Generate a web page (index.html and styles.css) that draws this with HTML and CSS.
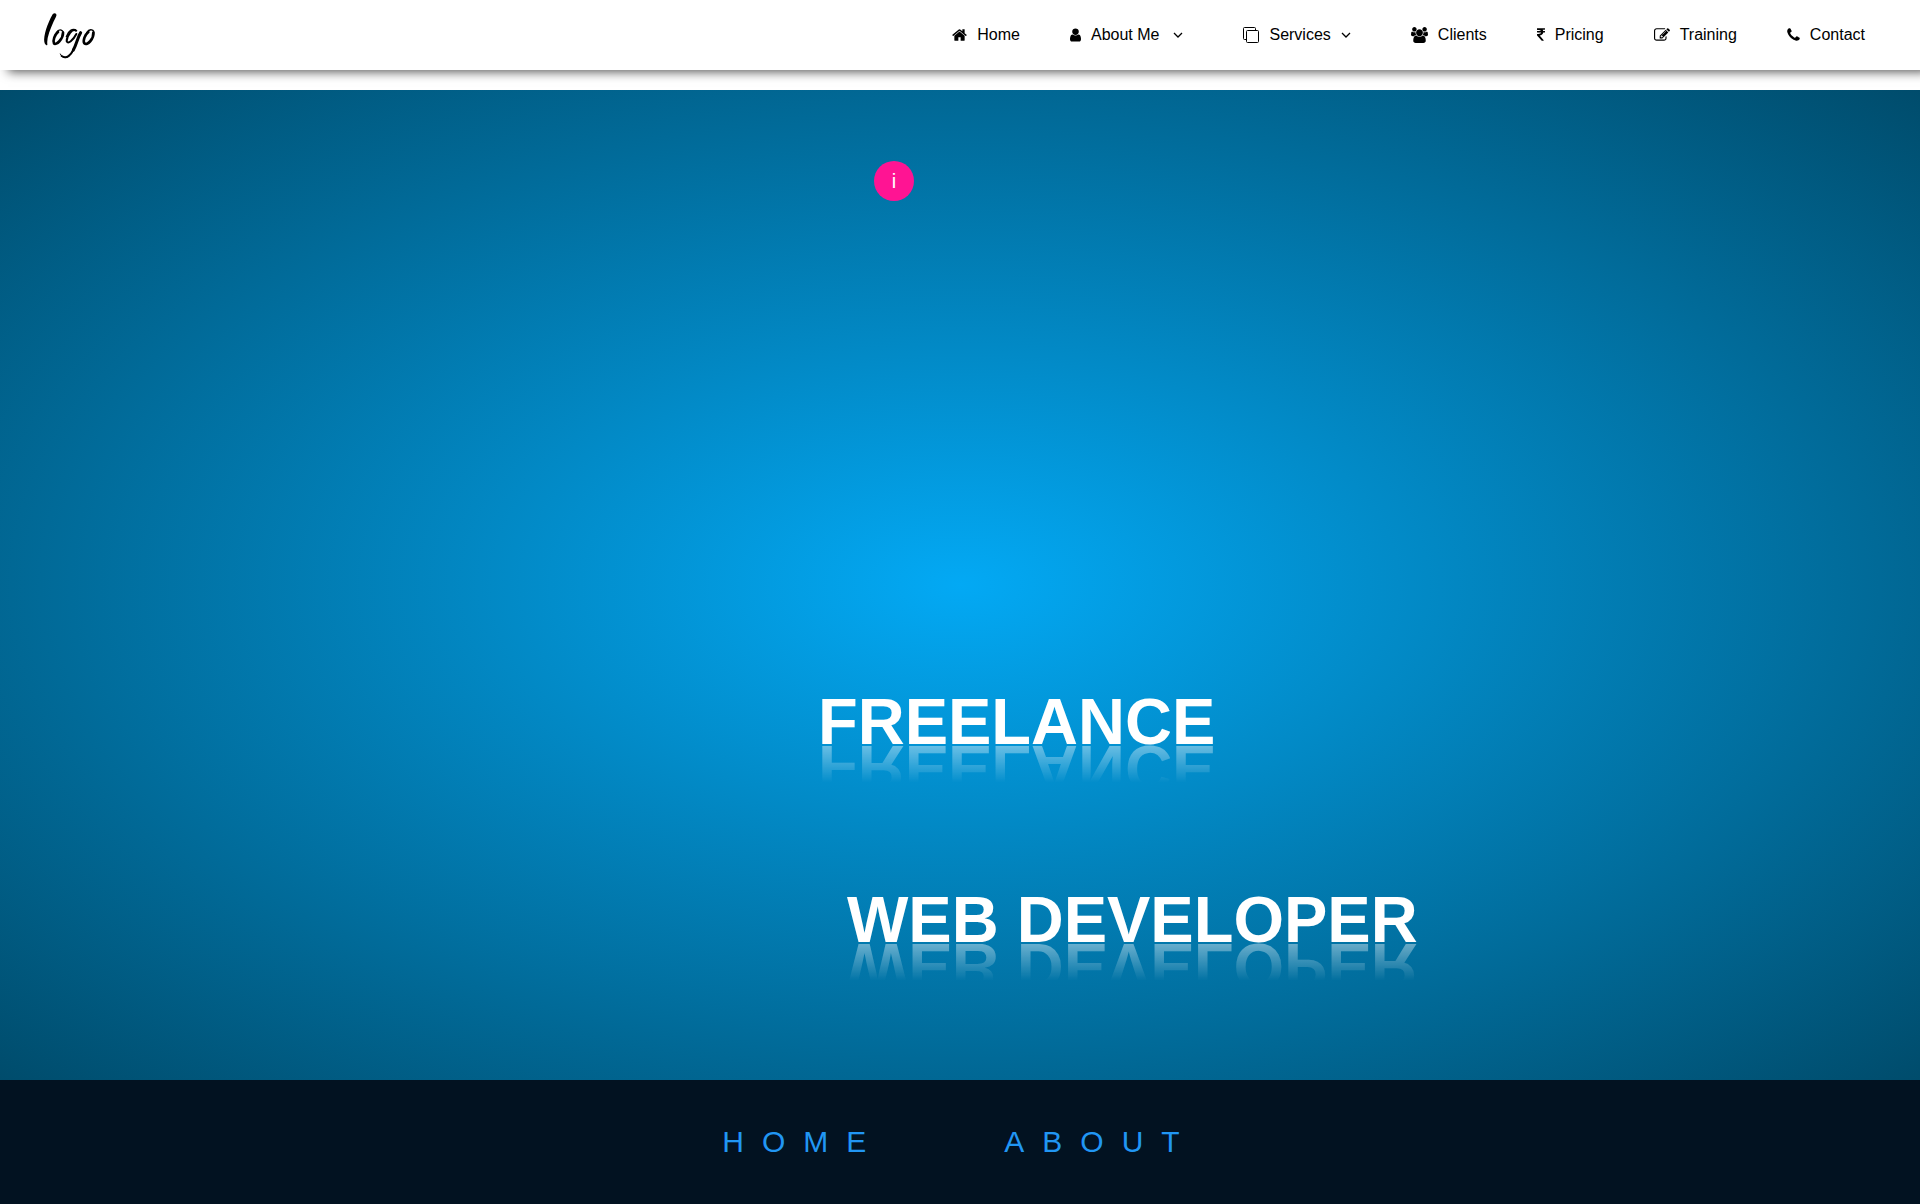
FILE: index.html
```html
<!DOCTYPE html>
<html lang="en">
<head>
<meta charset="utf-8">
<title>Freelance Web Developer</title>
<link rel="stylesheet" href="styles.css">
</head>
<body>
<header class="header">
  <a class="logo" href="#" aria-label="logo">
    <svg width="66" height="60" viewBox="0 -3 198 180" fill="none" stroke="#000" stroke-linecap="round" stroke-linejoin="round">
      <path fill="#000" stroke="none" d="M50 25Q55 19 60 23Q63 26 60 32C50 52 40 74 35 96Q33 108 34 117Q27 120 25 108C22 90 34 53 50 25z"/>
      <path stroke-width="8" d="M66 78C56 86 50 104 54 112C60 120 82 98 81 80"/>
      <path stroke-width="4" d="M61 80C70 66 84 72 81 84"/>
      <path stroke-width="6" d="M120 74C110 66 92 88 92 106C95 116 112 102 121 84"/>
      <path stroke-width="4" d="M122 74C110 64 96 76 91 92"/>
      <path stroke-width="9" d="M134 80C124 96 122 114 112 132"/>
      <path stroke-width="6" d="M114 128C104 148 92 160 77 150"/>
      <path stroke-width="3" d="M111 136C100 158 80 162 73 144"/>
      <path stroke-width="8" d="M157 78C147 86 140 104 145 112C154 120 174 98 172 80"/>
      <path stroke-width="4" d="M152 80C161 66 176 70 173 84"/>
    </svg>
  </a>
  <nav class="nav">
    <a class="nav-link" href="#"><svg class="icon" width="15" height="16" viewBox="0 0 1664 1792"><path d="M1408 992v480q0 26-19 45t-45 19H960v-384H704v384H320q-26 0-45-19t-19-45V992q0-1 .5-3t.5-3l575-474 575 474q1 2 1 6zm223-69l-62 74q-8 9-21 11h-3q-13 0-21-7L832 424l-692 577q-12 8-24 7-13-2-21-11l-62-74q-8-10-7-23.500t11-21.500l719-599q32-26 76-26t76 26l244 204V288q0-14 9-23t23-9h192q14 0 23 9t9 23v408l219 182q10 8 11 21.500t-7 23.500z"/></svg><span>Home</span></a>
    <a class="nav-link" href="#"><svg class="icon" width="11" height="16" viewBox="0 0 1280 1792"><path d="M1280 1399q0 109-62.500 187t-150.500 78H213q-88 0-150.500-78T0 1399q0-85 8.500-160.500t31.500-152 58.500-131 94-89T327 832q131 128 313 128t313-128q76 0 134.500 34.500t94 89 58.500 131 31.500 152 8.500 160.500zm-256-887q0 159-112.500 271.500T640 896 368.500 783.500 256 512t112.500-271.500T640 128t271.500 112.500T1024 512z"/></svg><span>About Me</span><svg class="chevron about-chevron" width="10" height="6" viewBox="0 0 10 6"><path d="M1 1l4 4 4-4"/></svg></a>
    <a class="nav-link" href="#"><svg class="icon" width="16" height="16" viewBox="0 0 16 16" fill="none" stroke="#000"><path d="M3.500 12.500H1.500a1 1 0 0 1-1-1V1.500a1 1 0 0 1 1-1h10a1 1 0 0 1 1 1v2"/><rect x="3.500" y="3.500" width="12" height="12" rx="1"/></svg><span>Services</span><svg class="chevron" width="10" height="6" viewBox="0 0 10 6"><path d="M1 1l4 4 4-4"/></svg></a>
    <a class="nav-link" href="#"><svg class="icon" width="17" height="16" viewBox="0 0 1920 1792"><path d="M593 896q-162 5-265 128H194q-82 0-138-40.500T0 865q0-353 124-353 6 0 43.500 21t97.500 42.500T384 597q67 0 133-23-5 37-5 66 0 139 81 256zm1071 637q0 120-73 189.500t-194 69.500H523q-121 0-194-69.500T256 1533q0-53 3.500-103.500t14-109T300 1212t43-97.500 62-81 85.500-53.500T602 960q10 0 43 21.500t73 48 107 48 135 21.500 135-21.500 107-48 73-48 43-21.500q61 0 111.500 20t85.500 53.500 62 81 43 97.500 26.500 108.500 14 109 3.500 103.500zM640 256q0 106-75 181t-181 75-181-75-75-181 75-181T384 0t181 75 75 181zm704 384q0 159-112.500 271.500T960 1024 688.500 911.500 576 640t112.500-271.500T960 256t271.500 112.500T1344 640zm576 225q0 78-56 118.500t-138 40.500h-134q-103-123-265-128 81-117 81-256 0-29-5-66 66 23 133 23 59 0 119-21.500t97.500-42.500 43.500-21q124 0 124 353zm-128-609q0 106-75 181t-181 75-181-75-75-181 75-181 181-75 181 75 75 181z"/></svg><span>Clients</span></a>
    <a class="nav-link" href="#"><svg class="icon" width="8" height="16" viewBox="0 0 898 1792"><path d="M898 470v102q0 14-9 23t-23 9H698q-23 144-129 234T293 948q167 178 459 536 14 16 4 34-8 18-29 18H532q-16 0-25-12Q201 1157 9 953q-9-9-9-22V804q0-13 9.500-22.500T32 772h112q132 0 212.500-43T459 604H32q-14 0-23-9t-9-23V470q0-14 9-23t23-9h413q-57-113-268-113H32q-13 0-22.500-9.500T0 293V160q0-14 9-23t23-9h832q14 0 23 9t9 23v102q0 14-9 23t-23 9H631q47 61 64 144h171q14 0 23 9t9 23z"/></svg><span>Pricing</span></a>
    <a class="nav-link" href="#"><svg class="icon" width="16" height="16" viewBox="0 0 1792 1792"><path d="M888 1184l116-116-152-152-116 116v56h96v96h56zm440-720q-16-16-33 1L945 815q-17 17-1 33t33-1l350-350q17-17 1-33zm80 594v190q0 119-84.500 203.500T1120 1536H288q-119 0-203.500-84.500T0 1248V416q0-119 84.500-203.500T288 128h832q63 0 117 25 15 7 18 23 3 17-9 29l-49 49q-14 14-32 8-23-6-45-6H288q-66 0-113 47t-47 113v832q0 66 47 113t113 47h832q66 0 113-47t47-113v-126q0-13 9-22l64-64q15-15 35-7t20 29zm-96-738l288 288-672 672H640V992zm444 132l-92 92-288-288 92-92q28-28 68-28t68 28l152 152q28 28 28 68t-28 68z"/></svg><span>Training</span></a>
    <a class="nav-link" href="#"><svg class="icon" width="13" height="16" viewBox="0 0 1408 1792"><path d="M1408 1240q0 27-10 70.500t-21 68.500q-21 50-122 106-94 51-186 51-27 0-52.500-3.500T959 1520t-47.500-14.500-55.500-20.500-49-18q-98-35-175-83-128-79-264.500-215.500T152 904q-48-77-83-175-3-9-18-49t-20.500-55.500T16 577 3.500 519.500 0 467q0-92 51-186Q107 180 157 159q25-11 68.500-21t70.500-10q14 0 21 3 18 6 53 76 11 19 30 54t35 63.500 31 53.500q3 4 17.500 25t21.500 35.500 7 28.500q0 20-28.500 50t-62 55-62 53-28.500 46q0 9 5 22.500t8.500 20.500 14 24 11.500 19q76 137 174 235t235 174q2 1 19 11.500t24 14 20.500 8.500 22.500 5q18 0 46-28.500t53-62 55-62 50-28.500q14 0 28.500 7t35.500 21.500 25 17.500q25 15 53.500 31t63.500 35 54 30q70 35 76 53 3 7 3 21z"/></svg><span>Contact</span></a>
  </nav>
</header>
<main class="hero">
  <button class="info" type="button">i</button>
  <h1 class="title">
    <span class="word">FREELANCE</span>
    <span class="word word-second">WEB DEVELOPER</span>
  </h1>
</main>
<footer class="footer">
  <a class="footer-link" href="#">HOME</a>
  <a class="footer-link" href="#">ABOUT</a>
</footer>
</body>
</html>
```
FILE: styles.css
```css
* { box-sizing: border-box; }

body {
  margin: 0;
  min-height: 100vh;
  display: flex;
  flex-direction: column;
  background: #fff;
  font-family: "Liberation Sans", Arial, sans-serif;
  font-size: 16px;
}

a { text-decoration: none; }

.header {
  display: flex;
  align-items: center;
  justify-content: space-between;
  height: 70px;
  margin-bottom: 20px;
  padding: 0 55px 0 36px;
  box-shadow: 8px 2px 10px rgba(0, 0, 0, 0.65);
}

.logo { display: flex; }

.nav {
  display: flex;
  gap: 50px;
}

.nav-link {
  display: flex;
  align-items: center;
  color: #000;
  line-height: 20px;
}

.icon { margin-right: 10px; }

.chevron {
  margin: 0 10px;
  fill: none;
  stroke: #000;
  stroke-width: 1.3;
}

.about-chevron { margin-left: 14px; }

.hero {
  flex: 1;
  display: flex;
  flex-direction: column;
  justify-content: space-between;
  padding: 71px 0 123px;
  background: radial-gradient(#03a9f4, #004c6c);
}

.info {
  width: 40px;
  height: 40px;
  margin-left: calc(50% - 86px);
  padding: 0;
  border: 0;
  border-radius: 50%;
  background: #ff1493;
  color: #fff;
  font: 20px/40px "Liberation Sans", Arial, sans-serif;
}

.title {
  display: flex;
  flex-direction: column;
  gap: 124px;
  align-items: flex-start;
  margin: 0;
  padding-left: calc(50% - 142px);
  color: #fff;
  font-size: 65px;
  line-height: 74px;
}

.word {
  -webkit-box-reflect: below -28px linear-gradient(transparent 30%, rgba(255, 255, 255, 0.57));
}

.word-second { margin-left: 29px; }

.footer {
  display: flex;
  justify-content: center;
  gap: 120px;
  padding: 45px 0;
  background: #021221;
}

.footer-link {
  color: #2196f3;
  font-size: 30px;
  line-height: 34px;
  letter-spacing: 18px;
}
```
